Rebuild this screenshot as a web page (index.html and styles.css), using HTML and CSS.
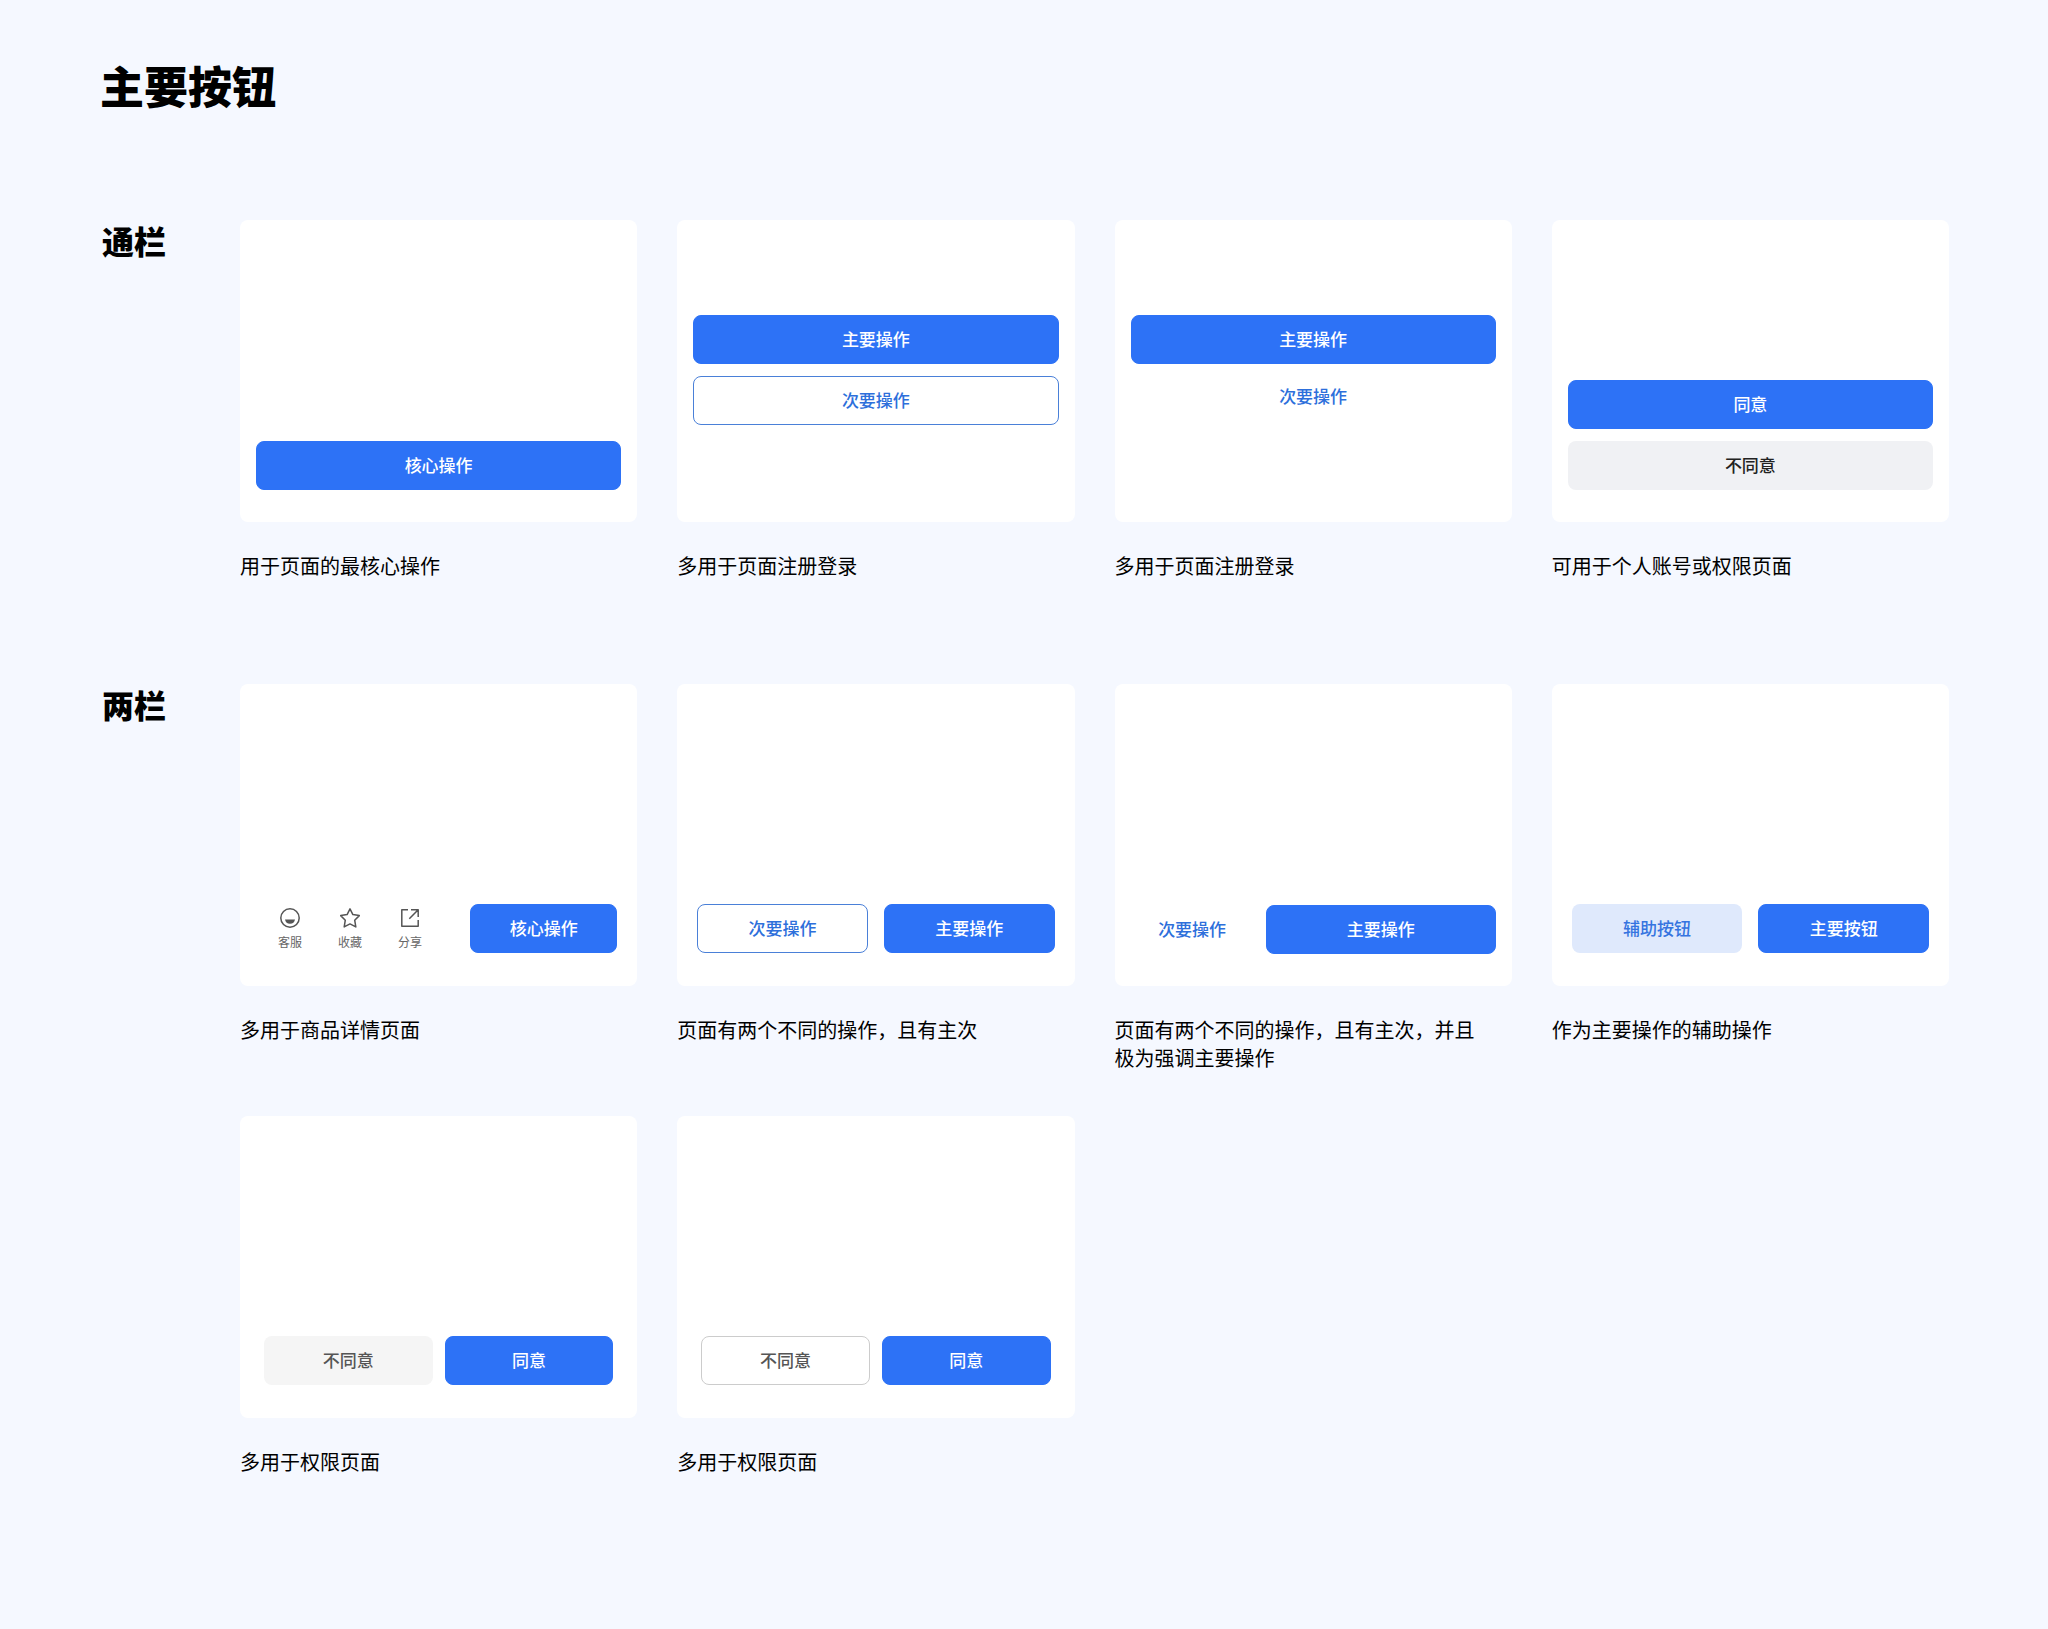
FILE: index.html
```html
<!DOCTYPE html>
<html lang="zh-CN">
<head>
    <meta charset="UTF-8">
    <meta name="viewport" content="width=device-width, initial-scale=1.0">
    <title>主要按钮</title>
    <link rel="stylesheet" href="styles.css">
</head>
<body>
    <main class="page">
        <h1 class="page-title">主要按钮</h1>

        <!-- Full-width buttons -->
        <section class="section">
            <h2 class="section-title">通栏</h2>
            <div class="examples">
                <figure class="example">
                    <div class="panel panel-stack">
                        <button type="button" class="btn btn-primary">核心操作</button>
                    </div>
                    <figcaption class="caption">用于页面的最核心操作</figcaption>
                </figure>
                <figure class="example">
                    <div class="panel panel-stack panel-top">
                        <button type="button" class="btn btn-primary">主要操作</button>
                        <button type="button" class="btn btn-outline">次要操作</button>
                    </div>
                    <figcaption class="caption">多用于页面注册登录</figcaption>
                </figure>
                <figure class="example">
                    <div class="panel panel-stack panel-top">
                        <button type="button" class="btn btn-primary">主要操作</button>
                        <button type="button" class="btn btn-text">次要操作</button>
                    </div>
                    <figcaption class="caption">多用于页面注册登录</figcaption>
                </figure>
                <figure class="example">
                    <div class="panel panel-stack">
                        <button type="button" class="btn btn-primary">同意</button>
                        <button type="button" class="btn btn-gray">不同意</button>
                    </div>
                    <figcaption class="caption">可用于个人账号或权限页面</figcaption>
                </figure>
            </div>
        </section>

        <!-- Two-column buttons -->
        <section class="section">
            <h2 class="section-title">两栏</h2>
            <div class="examples">
                <figure class="example">
                    <div class="panel panel-row">
                        <div class="actions">
                            <button type="button" class="action">
                                <svg class="action-icon" viewBox="0 0 20 20" aria-hidden="true">
                                    <circle cx="10" cy="10" r="9.2"/>
                                    <path class="solid" d="M5 11.4h10c-.4 2.700-2.300 4.300-5 4.300s-4.600-1.600-5-4.300z"/>
                                </svg>
                                <span>客服</span>
                            </button>
                            <button type="button" class="action">
                                <svg class="action-icon" viewBox="0 0 20 20" aria-hidden="true">
                                    <path d="M10 .8l2.900 5.800 6.400 1-4.600 4.600 1.100 6.700-5.800-3-5.800 3 1.100-6.700L.7 7.600l6.400-1z"/>
                                </svg>
                                <span>收藏</span>
                            </button>
                            <button type="button" class="action">
                                <svg class="action-icon" viewBox="0 0 20 20" aria-hidden="true">
                                    <path d="M8 1.800H1.800v16.400h16.400V12M11 1.800h7.200V9M18.200 1.800L9.300 10.700"/>
                                </svg>
                                <span>分享</span>
                            </button>
                        </div>
                        <button type="button" class="btn btn-primary btn-short">核心操作</button>
                    </div>
                    <figcaption class="caption">多用于商品详情页面</figcaption>
                </figure>
                <figure class="example">
                    <div class="panel panel-row">
                        <button type="button" class="btn btn-outline">次要操作</button>
                        <button type="button" class="btn btn-primary">主要操作</button>
                    </div>
                    <figcaption class="caption">页面有两个不同的操作，且有主次</figcaption>
                </figure>
                <figure class="example">
                    <div class="panel panel-row panel-emphasis">
                        <button type="button" class="btn btn-text">次要操作</button>
                        <button type="button" class="btn btn-primary btn-long">主要操作</button>
                    </div>
                    <figcaption class="caption">页面有两个不同的操作，且有主次，并且极为强调主要操作</figcaption>
                </figure>
                <figure class="example">
                    <div class="panel panel-row">
                        <button type="button" class="btn btn-light">辅助按钮</button>
                        <button type="button" class="btn btn-primary">主要按钮</button>
                    </div>
                    <figcaption class="caption">作为主要操作的辅助操作</figcaption>
                </figure>
                <figure class="example">
                    <div class="panel panel-row panel-consent">
                        <button type="button" class="btn btn-muted">不同意</button>
                        <button type="button" class="btn btn-primary">同意</button>
                    </div>
                    <figcaption class="caption">多用于权限页面</figcaption>
                </figure>
                <figure class="example">
                    <div class="panel panel-row panel-consent">
                        <button type="button" class="btn btn-outline-gray">不同意</button>
                        <button type="button" class="btn btn-primary">同意</button>
                    </div>
                    <figcaption class="caption">多用于权限页面</figcaption>
                </figure>
            </div>
        </section>
    </main>
</body>
</html>
```

FILE: styles.css
```css
* {
    box-sizing: border-box;
    margin: 0;
    padding: 0;
}

body {
    background-color: #f5f8ff;
    color: #000;
    font-family: "Noto Sans CJK SC", sans-serif;
}

.page {
    padding: 52px 99px 100px 100px;
}

.page-title {
    margin-bottom: 102px;
    font-size: 44px;
    font-weight: 900;
    line-height: 66px;
}

.section {
    display: grid;
    grid-template-columns: 140px 1fr;
}

.section + .section {
    margin-top: 104px;
}

.section-title {
    padding-left: 2px;
    font-size: 32px;
    font-weight: 900;
    line-height: 40px;
}

.examples {
    display: grid;
    grid-template-columns: repeat(4, 1fr);
    gap: 44px 40px;
}

.panel {
    display: flex;
    height: 302px;
    background-color: #fff;
    border-radius: 8px;
}

.panel-stack {
    flex-direction: column;
    justify-content: flex-end;
    gap: 12px;
    padding: 0 16px 32px;
}

.panel-top {
    justify-content: flex-start;
    padding-top: 95px;
}

.panel-row {
    align-items: flex-end;
    justify-content: space-between;
    gap: 16px;
    padding: 0 20px 33px;
}

.panel-emphasis {
    gap: 12px;
    padding: 0 16px 32px;
}

.panel-consent {
    gap: 12px;
    padding: 0 24px 33px;
}

.caption {
    margin-top: 30px;
    padding-right: 24px;
    font-size: 20px;
    line-height: 28px;
}

/* Buttons */
.btn {
    height: 49px;
    padding-bottom: 2px;
    border: 1px solid transparent;
    border-radius: 8px;
    background: transparent;
    font-family: inherit;
    font-size: 17px;
    font-weight: 500;
    line-height: 24px;
    cursor: pointer;
}

.panel-row .btn {
    flex: 1;
}

.panel-row .btn-short {
    flex: 0 0 147px;
}

.panel-row .btn-long {
    flex: 0 0 230px;
}

.btn-primary {
    background-color: #2d72f6;
    border-color: #2d72f6;
    color: #fff;
}

.btn-outline {
    border-color: #4a80d8;
    color: #2d6fdb;
}

.btn-text {
    color: #2d6fdb;
}

.panel-stack .btn-text {
    height: 42px;
}

.btn-light {
    background-color: #dfe9fc;
    color: #3574e0;
}

.btn-gray {
    background-color: #f0f1f4;
    color: #222;
}

.btn-muted {
    background-color: #f5f5f5;
    color: #555;
}

.btn-outline-gray {
    border-color: #ccc;
    color: #555;
}

/* Icon actions */
.actions {
    display: flex;
    align-items: center;
    height: 49px;
}

.action {
    display: flex;
    flex-direction: column;
    align-items: center;
    gap: 6px;
    width: 60px;
    border: none;
    background: transparent;
    color: #666;
    font-family: inherit;
    font-size: 12px;
    line-height: 16px;
    cursor: pointer;
}

.action-icon {
    width: 20px;
    height: 20px;
    fill: none;
    stroke: #555;
    stroke-width: 1.5;
    stroke-linejoin: round;
}

.action-icon .solid {
    fill: #555;
    stroke: none;
}

@media (max-width: 1700px) {
    .examples {
        grid-template-columns: repeat(auto-fill, minmax(380px, 1fr));
    }
}

@media (max-width: 700px) {
    .page {
        padding: 32px 16px;
    }

    .section,
    .examples {
        grid-template-columns: 1fr;
    }
}
```
